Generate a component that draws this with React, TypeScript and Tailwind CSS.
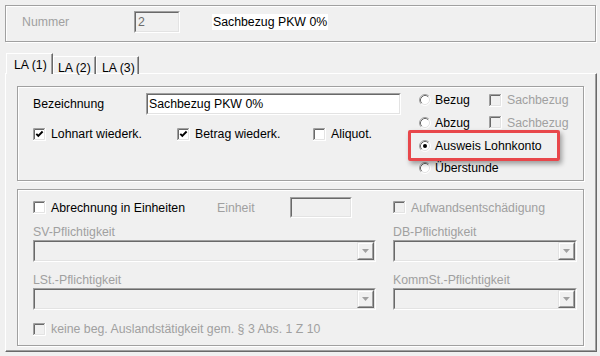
import React from 'react';

const Check = ({ checked = false, disabled = false }: { checked?: boolean; disabled?: boolean }) => (
  <svg width="13" height="13" viewBox="0 0 13 13" className="shrink-0">
    <rect x="0" y="0" width="13" height="13" fill={disabled ? '#f0f0f0' : '#ffffff'} />
    <path d="M0.5 12 V0.5 H12" stroke="#a0a0a0" fill="none" />
    <path d="M1.5 11 V1.5 H11" stroke="#696969" fill="none" />
    <path d="M0 12.5 H12.5 V0" stroke="#ffffff" fill="none" />
    <path d="M1 11.5 H11.5 V1" stroke="#e3e3e3" fill="none" />
    {checked && <path d="M3.3 5.8 L5.3 7.8 L9.6 3.5" stroke="#000" strokeWidth="1.9" fill="none" />}
  </svg>
);

const Radio = ({ checked = false }: { checked?: boolean }) => (
  <svg width="12" height="12" viewBox="0 0 12 12" className="shrink-0">
    <circle cx="6" cy="6" r="5" fill="#ffffff" />
    <path d="M2.11 9.89 A5.5 5.5 0 0 1 9.89 2.11" stroke="#a0a0a0" fill="none" />
    <path d="M2.82 9.18 A4.5 4.5 0 0 1 9.18 2.82" stroke="#696969" fill="none" />
    <path d="M9.89 2.11 A5.5 5.5 0 0 1 2.11 9.89" stroke="#ffffff" fill="none" />
    <path d="M9.18 2.82 A4.5 4.5 0 0 1 2.82 9.18" stroke="#e3e3e3" fill="none" />
    {checked && <circle cx="6" cy="6" r="2" fill="#000" />}
  </svg>
);

const Sunken = ({ className, children, bg = 'bg-[#f0f0f0]' }: { className: string; children?: React.ReactNode; bg?: string }) => (
  <div className={`${className} border border-t-[#a0a0a0] border-l-[#a0a0a0] border-b-white border-r-white`}>
    <div className={`h-full w-full border border-t-[#696969] border-l-[#696969] border-b-[#e3e3e3] border-r-[#e3e3e3] ${bg} flex items-center`}>
      {children}
    </div>
  </div>
);

const Combo = ({ w }: { w: string }) => (
  <Sunken className={`${w} h-[22px]`}>
    <div className="ml-auto h-full w-[17px] border border-t-[#e3e3e3] border-l-[#e3e3e3] border-b-[#696969] border-r-[#696969]">
      <div className="h-full w-full border border-t-white border-l-white border-b-[#a0a0a0] border-r-[#a0a0a0] bg-[#f0f0f0] flex items-center justify-center">
        <svg width="7" height="4" viewBox="0 0 7 4">
          <path d="M0 0 H7 L3.5 4 Z" fill="#a0a0a0" />
        </svg>
      </div>
    </div>
  </Sunken>
);

const etched = 'border border-[#a0a0a0] shadow-[1px_1px_0_#fff,inset_1px_1px_0_#fff]';
const gray = 'text-[#a0a0a0]';

export default function App() {
  return (
    <div className="w-[600px] h-[356px] overflow-hidden bg-[#f0f0f0] pt-[5px] pl-[5px] text-[12.3px] leading-[14px] text-black font-['Liberation_Sans',Arial,sans-serif]">
      {/* Kopf */}
      <div className={`w-[591px] h-[37px] ${etched} pl-[16px] pt-[5px]`}>
        <div className="flex items-center h-[22px]">
          <span className={`w-[112px] ${gray}`}>Nummer</span>
          <Sunken className="w-[46px] h-[22px]">
            <span className="pl-[2px] text-[#6d6d6d]">2</span>
          </Sunken>
          <span className="ml-[32px] bg-white px-[1px] py-[1px]">Sachbezug PKW 0%</span>
        </div>
      </div>

      {/* Tabs */}
      <div className="mt-[11px] h-[21px] -mb-[1px] pl-[1px] flex items-end">
        <div className="relative z-10 w-[47px] h-[21px] border-l border-t border-l-white border-t-white border-r border-r-[#696969] shadow-[inset_-1px_0_0_#a0a0a0] bg-[#f0f0f0] pl-[7px] pt-[4px]">
          LA (1)
        </div>
        <div className="w-[43px] h-[18px] border-l border-t border-l-white border-t-white border-r border-r-[#696969] shadow-[inset_-1px_0_0_#a0a0a0] pl-[4px] pt-[4px]">
          LA (2)
        </div>
        <div className="w-[43px] h-[18px] border-l border-t border-l-white border-t-white border-r border-r-[#696969] shadow-[inset_-1px_0_0_#a0a0a0] pl-[5px] pt-[4px]">
          LA (3)
        </div>
      </div>

      {/* Tab-Seite */}
      <div className="w-[592px] h-[279px] border border-t-white border-l-white border-r-[#696969] border-b-[#696969] shadow-[inset_-1px_-1px_0_#a0a0a0] pl-[11px] pt-[12px]">
        {/* Gruppe 1 */}
        <div className={`relative w-[567px] h-[95px] ${etched} flex`}>
          <div className="w-[401px] pl-[15px] pt-[6px]">
            <div className="flex items-center h-[22px]">
              <span className="w-[113px]">Bezeichnung</span>
              <Sunken className="w-[255px] h-[22px]" bg="bg-white">
                <span className="pl-[1px]">Sachbezug PKW 0%</span>
              </Sunken>
            </div>
            <div className="mt-[12px] flex items-center h-[14px]">
              <div className="w-[144px] flex items-center gap-[5px]">
                <Check checked />
                <span>Lohnart wiederk.</span>
              </div>
              <div className="w-[136px] flex items-center gap-[5px]">
                <Check checked />
                <span>Betrag wiederk.</span>
              </div>
              <div className="flex items-center gap-[5px]">
                <Check />
                <span>Aliquot.</span>
              </div>
            </div>
          </div>
          <div className="pt-[2px] flex flex-col">
            {[
              { l: 'Bezug', s: true },
              { l: 'Abzug', s: true },
              { l: 'Ausweis Lohnkonto', c: true },
              { l: 'Überstunde' },
            ].map((r) => (
              <div key={r.l} className="h-[22.67px] flex items-center">
                <div className="w-[70px] flex items-center gap-[4px] whitespace-nowrap">
                  <Radio checked={r.c} />
                  <span>{r.l}</span>
                </div>
                {r.s && (
                  <div className="flex items-center gap-[5px]">
                    <Check disabled />
                    <span className={gray}>Sachbezug</span>
                  </div>
                )}
              </div>
            ))}
          </div>
          {/* Markierung */}
          <div className="absolute left-[390px] top-[43px] w-[152px] h-[31px] border-[3px] border-[#e8474b] rounded-[2px] shadow-[2px_3px_5px_rgba(0,0,0,0.35)]" />
        </div>

        {/* Gruppe 2 */}
        <div className={`mt-[8px] w-[567px] h-[157px] ${etched} pl-[15px] pt-[7px]`}>
          <div className="grid grid-cols-[343px_184px] gap-x-[17px]">
            <div>
              <div className="flex items-center h-[21px]">
                <div className="w-[184px] flex items-center gap-[5px]">
                  <Check />
                  <span>Abrechnung in Einheiten</span>
                </div>
                <span className={`w-[73px] ${gray}`}>Einheit</span>
                <Sunken className="w-[62px] h-[21px]" />
              </div>
              <div className={`mt-[7px] h-[14px] ${gray}`}>SV-Pflichtigkeit</div>
              <div className="mt-[1px]">
                <Combo w="w-[343px]" />
              </div>
              <div className={`mt-[11px] h-[14px] ${gray}`}>LSt.-Pflichtigkeit</div>
              <div className="mt-[1px]">
                <Combo w="w-[343px]" />
              </div>
            </div>
            <div>
              <div className="flex items-center h-[21px] gap-[5px]">
                <Check disabled />
                <span className={gray}>Aufwandsentschädigung</span>
              </div>
              <div className={`mt-[7px] h-[14px] ${gray}`}>DB-Pflichtigkeit</div>
              <div className="mt-[1px]">
                <Combo w="w-[184px]" />
              </div>
              <div className={`mt-[11px] h-[14px] ${gray}`}>KommSt.-Pflichtigkeit</div>
              <div className="mt-[1px]">
                <Combo w="w-[184px]" />
              </div>
            </div>
          </div>
          <div className="mt-[12px] h-[14px] flex items-center gap-[5px]">
            <Check disabled />
            <span className={gray}>keine beg. Auslandstätigkeit gem. § 3 Abs. 1 Z 10</span>
          </div>
        </div>
      </div>
    </div>
  );
}
